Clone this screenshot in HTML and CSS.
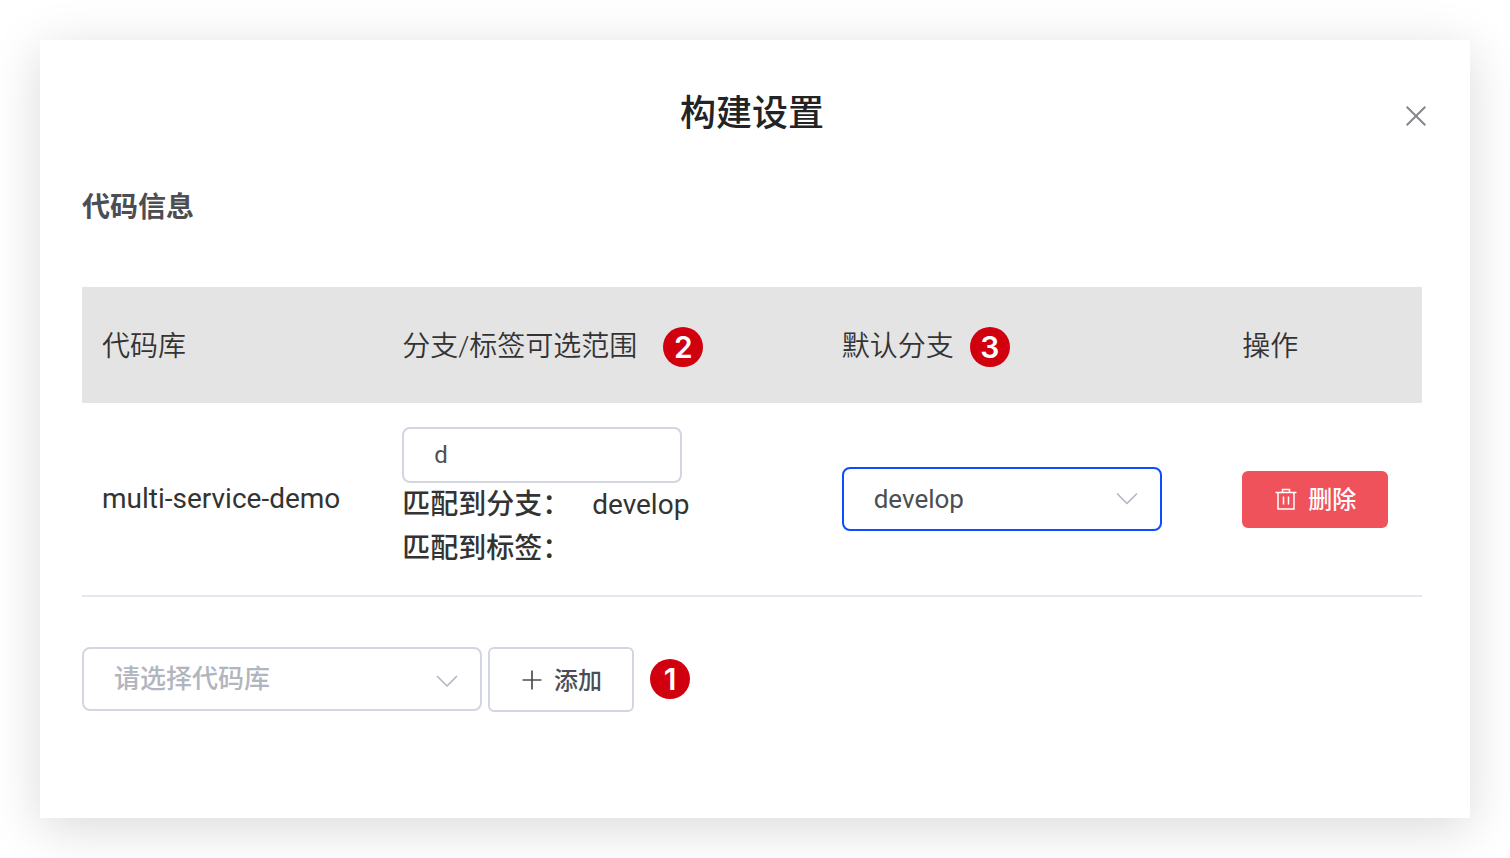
FILE: index.html
```html
<!DOCTYPE html>
<html lang="zh-CN">
<head>
<meta charset="utf-8">
<meta name="viewport" content="width=device-width, initial-scale=1">
<title>构建设置</title>
<link rel="stylesheet" href="styles.css">
</head>
<body>
<main class="dialog" role="dialog" aria-labelledby="dialog-title">
  <header class="dialog-header">
    <h1 class="dialog-title" id="dialog-title">构建设置</h1>
    <button class="close" type="button" aria-label="关闭">
      <svg width="28" height="28" viewBox="0 0 28 28" fill="none" stroke="currentColor" stroke-width="2"><path d="M4.700 4.700L23.300 23.300M23.300 4.700L4.700 23.300"/></svg>
    </button>
  </header>

  <section class="dialog-body">
    <h2 class="section-title">代码信息</h2>

    <table class="repo-table">
      <colgroup>
        <col class="col-repo"><col class="col-range"><col class="col-default"><col class="col-action">
      </colgroup>
      <thead>
        <tr>
          <th scope="col">代码库</th>
          <th scope="col"><div class="head-cell head-wide"><span>分支/标签可选范围</span><span class="badge">2</span></div></th>
          <th scope="col"><div class="head-cell"><span>默认分支</span><span class="badge">3</span></div></th>
          <th scope="col">操作</th>
        </tr>
      </thead>
      <tbody>
        <tr>
          <td>multi-service-demo</td>
          <td>
            <input class="field filter" type="text" value="d" aria-label="分支/标签可选范围">
            <div class="match"><span class="match-label">匹配到分支：</span><span>develop</span></div>
            <div class="match"><span class="match-label">匹配到标签：</span></div>
          </td>
          <td>
            <div class="select-wrap branch">
              <select class="field select active" aria-label="默认分支"><option>develop</option></select>
              <svg class="arrow" width="24" height="24" viewBox="0 0 24 24" fill="none" stroke="currentColor" stroke-width="1.700" stroke-linecap="round" stroke-linejoin="round"><path d="M2.500 7L12 16.500L21.500 7"/></svg>
            </div>
          </td>
          <td>
            <button class="btn danger" type="button">
              <svg width="24" height="24" viewBox="0 0 24 24" fill="none" stroke="currentColor" stroke-width="1.500"><path d="M1.500 5.500H22.500M8.500 5V2.500H15.500V5M4 5.500V22H20V5.500M9.500 9.500V17.500M14.500 9.500V17.500"/></svg>
              <span>删除</span>
            </button>
          </td>
        </tr>
      </tbody>
    </table>

    <div class="add-row">
      <div class="select-wrap repo">
        <select class="field select placeholder" aria-label="代码库"><option>请选择代码库</option></select>
        <svg class="arrow" width="24" height="24" viewBox="0 0 24 24" fill="none" stroke="currentColor" stroke-width="1.700" stroke-linecap="round" stroke-linejoin="round"><path d="M2.500 9.500L12 19L21.500 9.500"/></svg>
      </div>
      <button class="btn plain" type="button">
        <svg width="24" height="24" viewBox="0 0 24 24" fill="none" stroke="currentColor" stroke-width="1.700"><path d="M2.500 12H21.500M12 2.500V21.500"/></svg>
        <span>添加</span>
      </button>
      <span class="badge">1</span>
    </div>
  </section>
</main>
</body>
</html>
```
FILE: styles.css
```css
* {
  box-sizing: border-box;
}

body {
  margin: 0;
  padding: 40px;
  background: #fff;
  color: #333;
  font-family: Roboto, "Noto Sans CJK SC", sans-serif;
  font-size: 28px;
  line-height: 44px;
}

button,
input,
select {
  margin: 0;
  font-family: inherit;
}

.dialog {
  padding-bottom: 106px;
  background: #fff;
  box-shadow: 0 10px 48px rgba(0, 0, 0, 0.15);
}

.dialog-header {
  display: grid;
  grid-template-columns: 1fr auto 1fr;
  align-items: center;
  padding: 50px 40px 0 34px;
}

.dialog-title {
  grid-column: 2;
  margin: 0;
  color: #222325;
  font-size: 36px;
  font-weight: 500;
  line-height: 48px;
}

.close {
  justify-self: end;
  display: flex;
  margin-top: 4px;
  padding: 0;
  border: 0;
  background: none;
  color: #85878d;
}

.dialog-body {
  padding: 48px 48px 0 42px;
}

.section-title {
  margin: 0 0 57px;
  color: #4c4e53;
  font-size: 28px;
  font-weight: 700;
  line-height: 44px;
}

.repo-table {
  width: 100%;
  border-collapse: separate;
  border-spacing: 0;
  table-layout: fixed;
}

.col-repo {
  width: 22.4%;
}

.col-range {
  width: 32.8%;
}

.col-default {
  width: 29.9%;
}

.repo-table th {
  padding: 38px 20px 34px;
  background: #e4e4e4;
  font-weight: 350;
  text-align: left;
}

.repo-table td {
  padding: 24px 0 24px 20px;
  border-bottom: 2px solid #e4e7ef;
}

.head-cell {
  display: flex;
  align-items: center;
  gap: 16px;
}

.head-wide {
  gap: 26px;
}

.badge {
  flex: none;
  width: 40px;
  height: 40px;
  border-radius: 50%;
  background: #d0000f;
  color: #fff;
  font-family: Inter, sans-serif;
  font-size: 30px;
  font-weight: 600;
  line-height: 40px;
  text-align: center;
}

.field {
  display: block;
  width: 100%;
  padding: 0 30px;
  border: 2px solid #d3d6e0;
  border-radius: 8px;
  background: #fff;
  color: #4c4e53;
  font-size: 26px;
  outline: none;
}

.filter {
  width: 280px;
  height: 56px;
  font-size: 24px;
}

.match {
  display: flex;
  gap: 22px;
}

.match-label {
  font-weight: 500;
}

.select-wrap {
  position: relative;
}

.branch {
  width: 320px;
}

.repo {
  width: 400px;
}

.select {
  height: 64px;
  appearance: none;
}

.active {
  border-color: #0b4dff;
}

.placeholder {
  color: #b1b5be;
  font-weight: 500;
}

.arrow {
  position: absolute;
  top: 20px;
  right: 23px;
  color: #b5b8c4;
  pointer-events: none;
}

.btn {
  display: flex;
  align-items: center;
  gap: 10px;
  padding: 0 30px 3px;
  border: 2px solid #d3d6e0;
  border-radius: 6px;
  background: #fff;
  color: #4c4e53;
  font-size: 24px;
  font-weight: 500;
}

.btn svg {
  margin-top: 3px;
}

.plain {
  height: 65px;
}

.danger {
  height: 57px;
  border-color: #f0525b;
  background: #f0525b;
  color: #fff;
}

.add-row {
  display: flex;
  align-items: flex-start;
  gap: 6px;
  margin-top: 50px;
}

.add-row .badge {
  margin: 12px 0 0 10px;
}
```
